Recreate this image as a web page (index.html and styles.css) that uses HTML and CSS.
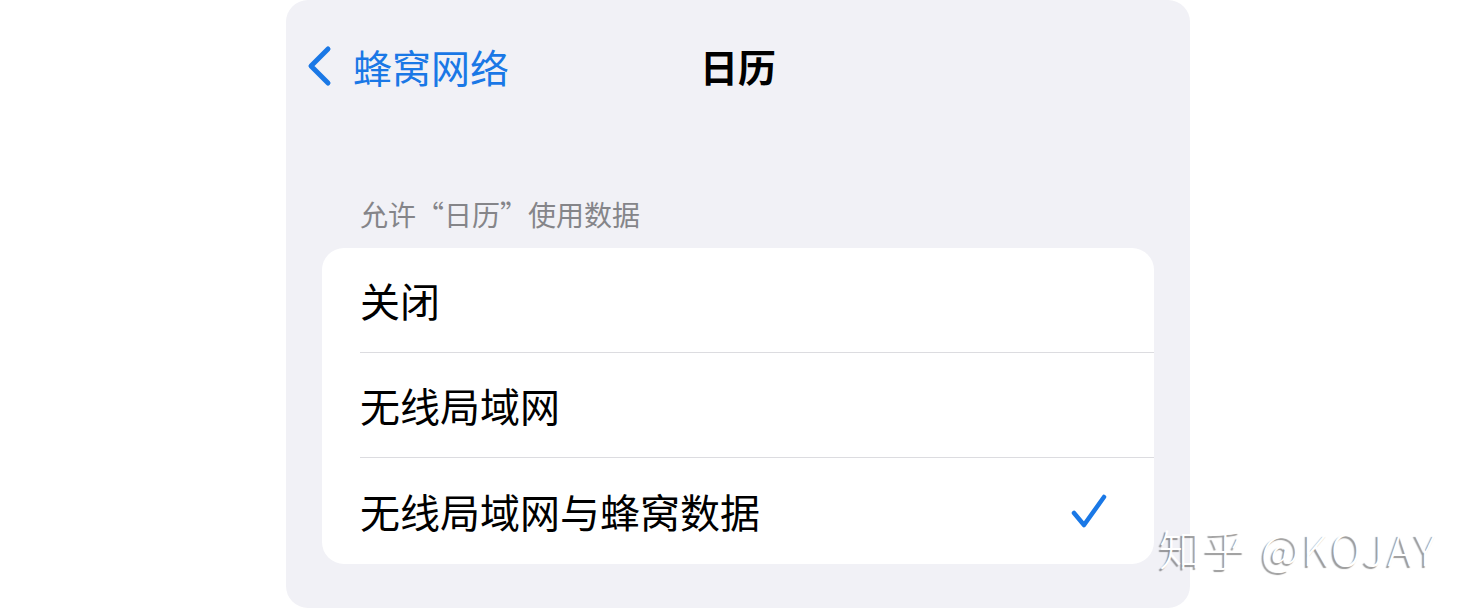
FILE: index.html
```html
<!DOCTYPE html>
<html lang="zh-CN">
<head>
    <meta charset="UTF-8">
    <meta name="viewport" content="width=device-width, initial-scale=1.0">
    <title>日历</title>
    <link rel="stylesheet" href="styles.css">
</head>
<body>
    <div class="screen">
        <div class="nav-bar">
            <a class="back-link" href="#">
                <svg class="chevron" width="28" height="42" viewBox="0 0 28 42">
                    <path d="M23 4 L6 21 L23 38" fill="none" stroke="#1a78e6" stroke-width="5" stroke-linecap="round" stroke-linejoin="round"/>
                </svg>
                <span>蜂窝网络</span>
            </a>
            <div class="nav-title">日历</div>
            <div></div>
        </div>

        <div class="section-header">允许“日历”使用数据</div>

        <ul class="option-list">
            <li class="option-row"><span>关闭</span></li>
            <li class="option-row"><span>无线局域网</span></li>
            <li class="option-row selected">
                <span>无线局域网与蜂窝数据</span>
                <svg class="check" width="36" height="36" viewBox="0 0 36 36">
                    <path d="M3 20 L13 32 L33 4" fill="none" stroke="#1a78e6" stroke-width="4.5" stroke-linecap="round" stroke-linejoin="round"/>
                </svg>
            </li>
        </ul>
    </div>

    <div class="watermark">知乎 @KOJAY</div>
</body>
</html>
```

FILE: styles.css
```css
body {
    margin: 0;
    background-color: #fff;
    font-family: "Noto Sans CJK SC", "Noto Sans", sans-serif;
    color: #000;
    overflow: hidden;
}

.screen {
    margin-left: 286px;
    width: 904px;
    height: 608px;
    background-color: #f1f1f6;
    border-radius: 22px;
    display: flex;
    flex-direction: column;
}

.nav-bar {
    height: 132px;
    display: grid;
    grid-template-columns: 1fr auto 1fr;
    align-items: center;
    padding-left: 19px;
}

.back-link {
    display: flex;
    align-items: center;
    gap: 20px;
    color: #1a78e6;
    text-decoration: none;
    font-size: 39px;
    line-height: 1;
}

.nav-title {
    font-size: 38px;
    font-weight: 700;
    line-height: 1;
    margin-left: -19px; /* 中央揃えを画面全体に合わせる */
}

.section-header {
    height: 116px;
    display: flex;
    align-items: flex-end;
    box-sizing: border-box;
    padding: 0 0 14px 74px;
    font-size: 28px;
    line-height: 40px;
    color: #858589;
}

.option-list {
    list-style: none;
    margin: 0 36px;
    padding: 0;
    background-color: #fff;
    border-radius: 22px;
    overflow: hidden;
}

.option-row {
    height: 104px;
    display: flex;
    align-items: center;
    justify-content: space-between;
    margin-left: 38px;
    padding-right: 47px;
    font-size: 40px;
    line-height: 1;
    border-bottom: 1px solid #dcdce0;
}

.option-row:last-child {
    border-bottom: none;
    height: 106px;
}

.watermark {
    position: absolute;
    left: 1159px;
    top: 524px;
    font-size: 42px;
    line-height: 48px;
    color: #fff;
    font-weight: 300;
    letter-spacing: 3px;
    text-shadow: -2px 2px 1px rgba(0, 0, 0, 0.4);
}
```
